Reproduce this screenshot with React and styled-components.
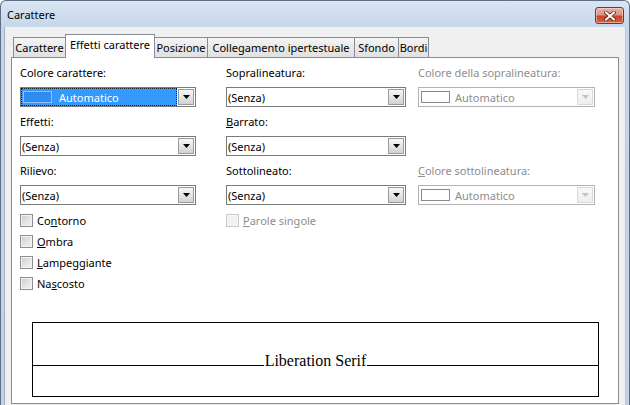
import React from 'react';
import styled, { createGlobalStyle, css } from 'styled-components';

const Global = createGlobalStyle`
  html, body { margin: 0; padding: 0; background: #ffffff; }
  body { font-family: "Noto Sans", "DejaVu Sans", sans-serif; font-size: 11px; }
`;

const Window = styled.div`
  width: 630px;
  height: 405px;
  box-sizing: border-box;
  border: 1px solid #5f6f86;
  border-bottom: none;
  border-radius: 6px 6px 0 0;
  background: linear-gradient(#dae5f2, #c6d6eb 26px, #c0d2ea);
  display: flex;
  flex-direction: column;
  overflow: hidden;
  font-family: "Noto Sans", "DejaVu Sans", sans-serif;
  font-size: 11px;
  color: #000;
`;

const TitleBar = styled.div`
  height: 26px;
  flex: none;
  display: flex;
  align-items: flex-start;
  justify-content: space-between;
  padding: 0 5px 0 6px;
`;

const TitleText = styled.div`
  padding-top: 7px;
  line-height: 14px;
  color: #000;
`;

const CloseButton = styled.div`
  margin-top: 6px;
  width: 29px;
  height: 17px;
  box-sizing: border-box;
  border: 1px solid #74362a;
  border-radius: 3px;
  background: linear-gradient(#e8b3a8 0%, #dc9485 45%, #c9452d 55%, #d4613f 100%);
  box-shadow: inset 0 0 0 1px rgba(255, 220, 210, 0.55);
  display: flex;
  align-items: center;
  justify-content: center;
`;

const Client = styled.div`
  flex: 1;
  margin: 0 3px;
  border-left: 1px solid #9fb1c8;
  border-right: 1px solid #b8c8dc;
  background: #f0f0f0;
  padding: 7px 6px 1px 6px;
  display: flex;
  flex-direction: column;
`;

const TabStrip = styled.div`
  display: flex;
  align-items: flex-end;
  padding-left: 2px;
  height: 24px;
  margin-bottom: -1px;
  position: relative;
  z-index: 1;
  flex: none;
`;

const Tab = styled.div`
  width: ${p => p.$w}px;
  height: 21px;
  box-sizing: border-box;
  border: 1px solid #898c95;
  margin-right: -1px;
  background: linear-gradient(#f4f4f4, #e9e9e9 50%, #e1e1e1);
  display: flex;
  align-items: center;
  justify-content: center;
  line-height: 14px;
  white-space: nowrap;
  ${p => p.$active && css`
    height: 24px;
    background: #ffffff;
    border-bottom: none;
    position: relative;
    z-index: 2;
    padding-bottom: 3px;
  `}
`;

const Panel = styled.div`
  flex: 1;
  border: 1px solid #898c95;
  background: #ffffff;
  padding: 8px 0 6px 8px;
  display: flex;
  flex-direction: column;
`;

const Columns = styled.div`
  display: flex;
  align-items: flex-start;
`;

const Column = styled.div`
  width: ${p => p.$w}px;
  display: flex;
  flex-direction: column;
`;

const Field = styled.div`
  display: flex;
  flex-direction: column;
  margin-bottom: 8px;
`;

const Spacer = styled.div`
  height: ${p => p.$h}px;
`;

const Label = styled.div`
  height: 14px;
  line-height: 14px;
  margin-bottom: 7px;
  white-space: nowrap;
  color: ${p => (p.$disabled ? '#8d8d8d' : '#000')};
`;

const Combo = styled.div`
  width: ${p => p.$w}px;
  height: 20px;
  box-sizing: border-box;
  border: 1px solid ${p => (p.$disabled ? '#b3b3b3' : '#7a7a7a')};
  background: #ffffff;
  display: flex;
  align-items: stretch;
`;

const ComboValue = styled.div`
  flex: 1;
  display: flex;
  align-items: center;
  padding-left: 1px;
  white-space: nowrap;
  color: ${p => (p.$disabled ? '#8d8d8d' : '#000')};
  ${p => p.$selected && css`
    background: #3399ff;
    color: #ffffff;
    outline: 1px dotted #1a1a1a;
    outline-offset: -1px;
    margin-right: 1px;
  `}
`;

const Swatch = styled.span`
  width: 29px;
  height: 12px;
  box-sizing: border-box;
  margin: 0 ${p => (p.$selected ? 7 : 5)}px 0 1px;
  border: 1px solid ${p => (p.$selected ? '#8cc3ff' : '#8a8a8a')};
  background: ${p => (p.$selected ? '#2f8cf0' : '#ffffff')};
  flex: none;
`;

const ComboButton = styled.div`
  width: 16px;
  margin: 1px 1px 1px 0;
  box-sizing: border-box;
  border: 1px solid ${p => (p.$disabled ? '#d9d9d9' : '#9a9a9a')};
  background: ${p => (p.$disabled
    ? 'linear-gradient(#f7f7f7, #efefef)'
    : 'linear-gradient(#f6f6f6, #e6e6e6 50%, #d2d2d2)')};
  display: flex;
  align-items: center;
  justify-content: center;
  flex: none;
`;

const CheckList = styled.div`
  display: flex;
  flex-direction: column;
  gap: 5px;
  margin-top: -1px;
`;

const CheckRow = styled.div`
  display: flex;
  align-items: center;
  gap: 4px;
  height: 16px;
  white-space: nowrap;
  color: ${p => (p.$disabled ? '#8d8d8d' : '#000')};
`;

const CheckBox = styled.span`
  width: 13px;
  height: 13px;
  box-sizing: border-box;
  flex: none;
  border: 1px solid ${p => (p.$disabled ? '#c9c9c9' : '#8e8f8f')};
  box-shadow: inset 0 0 0 1px ${p => (p.$disabled ? '#f7f7f7' : '#f4f4f4')};
  background: ${p => (p.$disabled
    ? '#f2f2f2'
    : 'linear-gradient(135deg, #cbcbcb, #e7e7e7 60%, #f3f3f3)')};
`;

const Mnemonic = styled.u`
  text-decoration: underline;
  text-underline-offset: 1px;
`;

const Preview = styled.div`
  margin-top: auto;
  margin-left: 12px;
  width: 567px;
  height: 75px;
  box-sizing: border-box;
  border: 1px solid #000;
  display: flex;
  flex-direction: column;
`;

const PreviewRow = styled.div`
  margin-top: 30px;
  display: flex;
  align-items: baseline;
`;

const Rule = styled.div`
  flex: 1;
  height: 1px;
  background: #000;
`;

const PreviewText = styled.span`
  font-family: "Liberation Serif", "Times New Roman", serif;
  font-size: 16px;
  line-height: 16px;
  color: #000;
  padding: 0 1px;
`;

const Arrow = ({ disabled }) => (
  <svg width="7" height="4" viewBox="0 0 7 4">
    <path d="M0 0H7L3.5 4Z" fill={disabled ? '#c2c2c2' : '#000'} />
  </svg>
);

const CloseX = () => (
  <svg width="12" height="10" viewBox="0 0 12 10">
    <path d="M2 1.5L10 8.5M10 1.5L2 8.5" stroke="#5a1d12" strokeWidth="3.6" strokeLinecap="square" />
    <path d="M2 1.5L10 8.5M10 1.5L2 8.5" stroke="#ffffff" strokeWidth="2" strokeLinecap="square" />
  </svg>
);

const Select = ({ w, value, disabled, selected, swatch }) => (
  <Combo $w={w} $disabled={disabled}>
    <ComboValue $disabled={disabled} $selected={selected}>
      {swatch && <Swatch $selected={selected} />}
      {value}
    </ComboValue>
    <ComboButton $disabled={disabled}>
      <Arrow disabled={disabled} />
    </ComboButton>
  </Combo>
);

const Check = ({ children, disabled }) => (
  <CheckRow $disabled={disabled}>
    <CheckBox $disabled={disabled} />
    <span>{children}</span>
  </CheckRow>
);

const tabs = [
  { label: 'Carattere', w: 53 },
  { label: 'Effetti carattere', w: 90, active: true },
  { label: 'Posizione', w: 54 },
  { label: 'Collegamento ipertestuale', w: 148 },
  { label: 'Sfondo', w: 45 },
  { label: 'Bordi', w: 31 },
];

export default function App() {
  return (
    <>
      <Global />
      <Window>
        <TitleBar>
          <TitleText>Carattere</TitleText>
          <CloseButton>
            <CloseX />
          </CloseButton>
        </TitleBar>
        <Client>
          <TabStrip>
            {tabs.map(t => (
              <Tab key={t.label} $w={t.w} $active={t.active}>{t.label}</Tab>
            ))}
          </TabStrip>
          <Panel>
            <Columns>
              <Column $w={206}>
                <Field>
                  <Label>Colore carattere:</Label>
                  <Select w={176} value="Automatico" selected swatch />
                </Field>
                <Field>
                  <Label>Effetti:</Label>
                  <Select w={176} value="(Senza)" />
                </Field>
                <Field>
                  <Label>Rilievo:</Label>
                  <Select w={176} value="(Senza)" />
                </Field>
                <CheckList>
                  <Check>Co<Mnemonic>n</Mnemonic>torno</Check>
                  <Check><Mnemonic>O</Mnemonic>mbra</Check>
                  <Check><Mnemonic>L</Mnemonic>ampeggiante</Check>
                  <Check>Na<Mnemonic>s</Mnemonic>costo</Check>
                </CheckList>
              </Column>
              <Column $w={192}>
                <Field>
                  <Label>Sopralineatura:</Label>
                  <Select w={180} value="(Senza)" />
                </Field>
                <Field>
                  <Label><Mnemonic>B</Mnemonic>arrato:</Label>
                  <Select w={180} value="(Senza)" />
                </Field>
                <Field>
                  <Label>Sottolineato:</Label>
                  <Select w={180} value="(Senza)" />
                </Field>
                <CheckList>
                  <Check disabled><Mnemonic>P</Mnemonic>arole singole</Check>
                </CheckList>
              </Column>
              <Column $w={177}>
                <Field>
                  <Label $disabled>Colore della sopralineatura:</Label>
                  <Select w={177} value="Automatico" disabled swatch />
                </Field>
                <Spacer $h={49} />
                <Field>
                  <Label $disabled><Mnemonic>C</Mnemonic>olore sottolineatura:</Label>
                  <Select w={177} value="Automatico" disabled swatch />
                </Field>
              </Column>
            </Columns>
            <Preview>
              <PreviewRow>
                <Rule />
                <PreviewText>Liberation Serif</PreviewText>
                <Rule />
              </PreviewRow>
            </Preview>
          </Panel>
        </Client>
      </Window>
    </>
  );
}
